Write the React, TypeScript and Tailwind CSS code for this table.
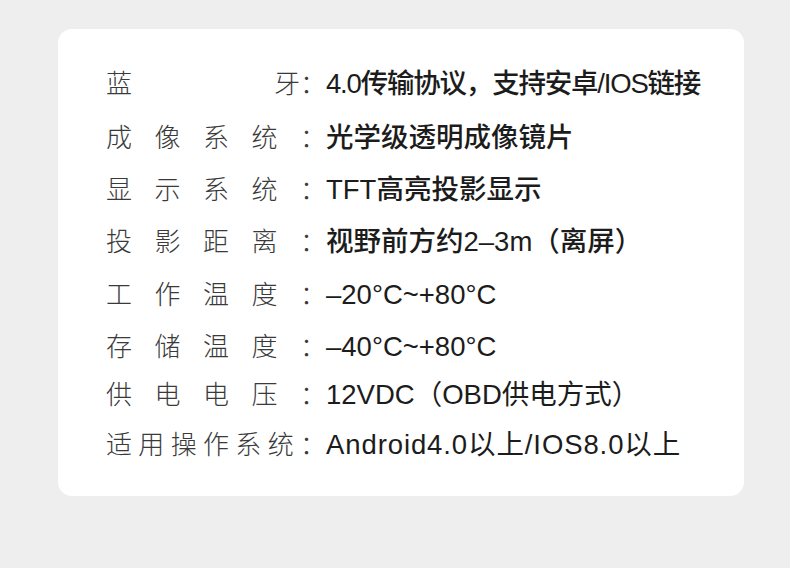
import React from "react";

const rows: { label: string[]; value: string; cls: string; text: string }[] = [
  { label: ["蓝", "牙："], value: "4.0传输协议，支持安卓/IOS链接", cls: "", text: "font-medium tracking-[-1.2px]" },
  { label: ["成", "像", "系", "统", "："], value: "光学级透明成像镜片", cls: "mt-[2px]", text: "font-medium" },
  { label: ["显", "示", "系", "统", "："], value: "TFT高亮投影显示", cls: "", text: "font-medium" },
  { label: ["投", "影", "距", "离", "："], value: "视野前方约2–3m（离屏）", cls: "", text: "font-medium" },
  { label: ["工", "作", "温", "度", "："], value: "–20°C~+80°C", cls: "mt-[1px]", text: "font-normal" },
  { label: ["存", "储", "温", "度", "："], value: "–40°C~+80°C", cls: "", text: "font-normal" },
  { label: ["供", "电", "电", "压", "："], value: "12VDC（OBD供电方式）", cls: "-mt-[4px]", text: "font-normal" },
  { label: ["适", "用", "操", "作", "系", "统", "："], value: "Android4.0以上/IOS8.0以上", cls: "-mt-[2px]", text: "font-normal tracking-[0.9px]" },
];

export default function App() {
  return (
    <div className="h-[568px] w-[790px] bg-[#eeeeee] pt-[29px] pl-[58px]">
      <div className="w-[686px] h-[467px] rounded-[14px] bg-white pl-[48px] pt-[27px]">
        {rows.map((row, i) => (
          <div key={i} className={`flex items-baseline h-[52px] ${row.cls}`}>
            <div className="flex justify-between w-[220px] text-[26px] leading-[52px] font-light text-[#3a3a3a] font-['Noto_Sans_CJK_SC',sans-serif]">
              {row.label.map((ch, j) => (
                <span key={j}>{ch}</span>
              ))}
            </div>
            <div className={`text-[27.5px] leading-[52px] ${row.text} text-[#1c1c1c] font-['Liberation_Sans','Noto_Sans_CJK_SC',sans-serif]`}>
              {row.value}
            </div>
          </div>
        ))}
      </div>
    </div>
  );
}
